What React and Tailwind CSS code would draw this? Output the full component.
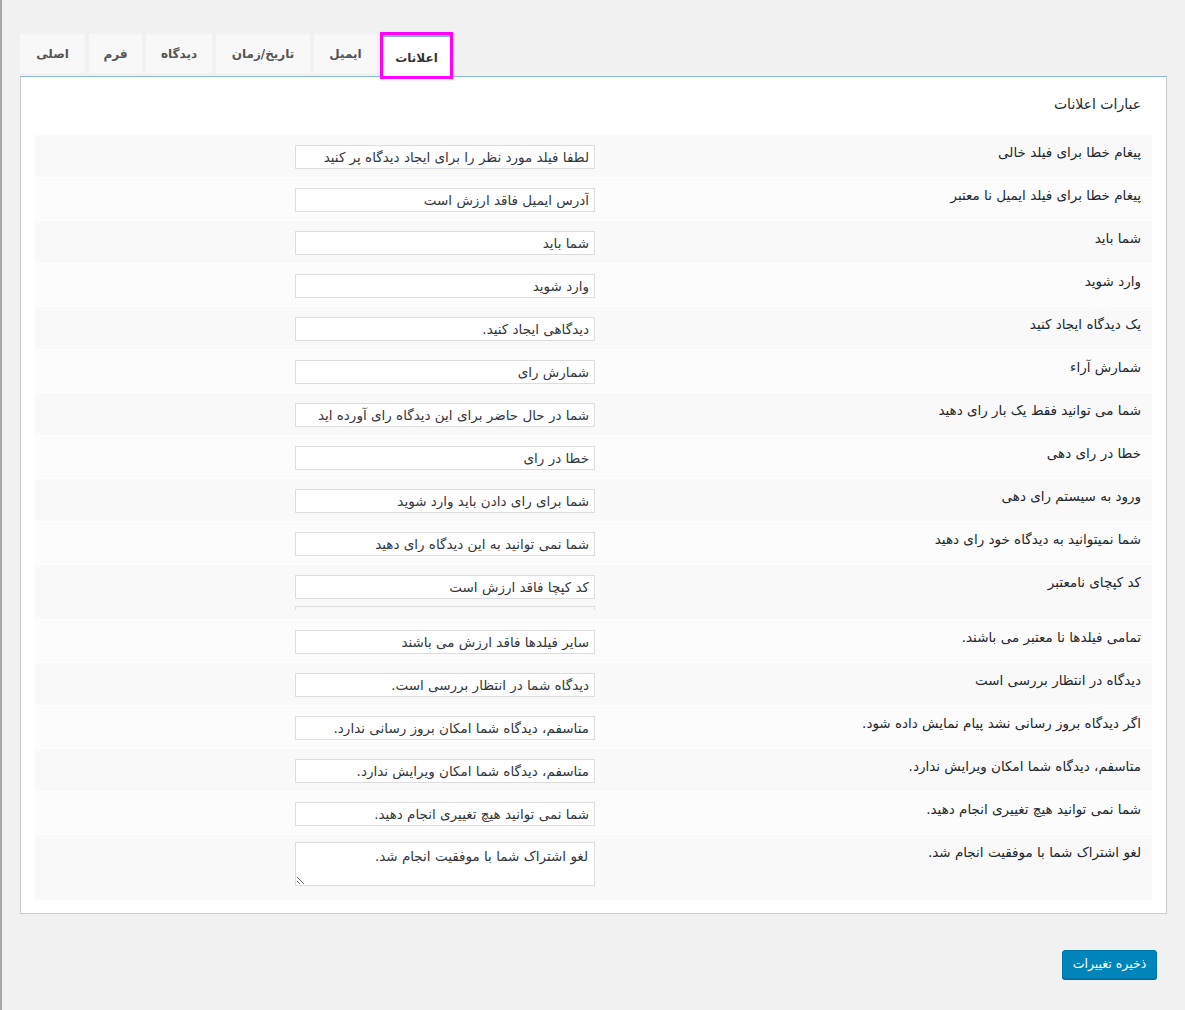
import React from "react";

const rows = [
  ["پیغام خطا برای فیلد خالی", "لطفا فیلد مورد نظر را برای ایجاد دیدگاه پر کنید"],
  ["پیغام خطا برای فیلد ایمیل نا معتبر", "آدرس ایمیل فاقد ارزش است"],
  ["شما باید", "شما باید"],
  ["وارد شوید", "وارد شوید"],
  ["یک دیدگاه ایجاد کنید", "دیدگاهی ایجاد کنید."],
  ["شمارش آراء", "شمارش رای"],
  ["شما می توانید فقط یک بار رای دهید", "شما در حال حاضر برای این دیدگاه رای آورده اید"],
  ["خطا در رای دهی", "خطا در رای"],
  ["ورود به سیستم رای دهی", "شما برای رای دادن باید وارد شوید"],
  ["شما نمیتوانید به دیدگاه خود رای دهید", "شما نمی توانید به این دیدگاه رای دهید"],
  ["کد کپچای نامعتبر", "کد کپچا فاقد ارزش است", "captcha"],
  ["تمامی فیلدها نا معتبر می باشند.", "سایر فیلدها فاقد ارزش می باشند"],
  ["دیدگاه در انتظار بررسی است", "دیدگاه شما در انتظار بررسی است."],
  ["اگر دیدگاه بروز رسانی نشد پیام نمایش داده شود.", "متاسفم، دیدگاه شما امکان بروز رسانی ندارد."],
  ["متاسفم، دیدگاه شما امکان ویرایش ندارد.", "متاسفم، دیدگاه شما امکان ویرایش ندارد."],
  ["شما نمی توانید هیچ تغییری انجام دهید.", "شما نمی توانید هیچ تغییری انجام دهید."],
  ["لغو اشتراک شما با موفقیت انجام شد.", "لغو اشتراک شما با موفقیت انجام شد.", "textarea"],
];

const tabs = [
  ["اصلی", "w-[65px]"],
  ["فرم", "w-[53px]"],
  ["دیدگاه", "w-[66px]"],
  ["تاریخ/زمان", "w-[94px]"],
  ["ایمیل", "w-[63px]"],
];

const font = { fontFamily: '"DejaVu Sans", sans-serif' };

export default function App() {
  return (
    <div
      className="min-h-[1010px] bg-[#f1f1f1] border-l-2 border-[#a8a8a8] pl-[18px] pr-[18px] pt-[32px] text-[#32373c]"
      style={font}
    >
      {/* Tabs */}
      <div className="flex items-start gap-[4px] h-[44px]">
        {tabs.map(([t, w]) => (
          <div
            key={t}
            className={`${w} mt-[2px] h-[39px] bg-[#f8f8f8] flex items-center justify-center text-[12px] font-bold text-[#555]`}
            dir="rtl"
          >
            {t}
          </div>
        ))}
        <div className="relative z-10 -ml-px w-[73px] h-[47px] border-[3px] border-[#ff00ff]">
          <div
            className="h-full bg-white border-t-2 border-[#7fb3de] flex items-center justify-center pt-[2px] text-[12px] font-bold text-[#333]"
            dir="rtl"
          >
            اعلانات
          </div>
        </div>
      </div>

      {/* Panel */}
      <div className="bg-white border border-[#cccccc] border-t-[#8cb6d8] px-[14px] pt-[17px] pb-[13px]" dir="rtl">
        <h2 className="text-[14px] leading-[20px] font-normal text-[#23282d] pr-[11px] mb-[21px]">
          عبارات اعلانات
        </h2>
        <div className="flex flex-col gap-px">
          {rows.map(([label, value, kind], i) => (
            <div
              key={i}
              className={`flex ${i % 2 === 0 ? "bg-[#f9f9f9]" : "bg-[#fcfcfc]"} ${
                kind === "captcha" ? "h-[54px]" : kind === "textarea" ? "h-[65px]" : "h-[42px]"
              }`}
            >
              <div className="w-[547px] shrink-0 pr-[11px] pt-[8px] text-[13.5px] leading-[18px] text-[#23282d]">
                {label}
              </div>
              <div className={`flex-1 pr-[10px] ${kind === "textarea" ? "pt-[7px]" : "pt-[10px]"} overflow-hidden`}>
                {kind === "textarea" ? (
                  <textarea
                    dir="rtl"
                    readOnly
                    defaultValue={value}
                    className="block w-[300px] h-[44px] border border-[#dddddd] bg-white px-[6px] pt-[4px] text-[13.5px] leading-[18px] text-[#32373c] outline-none resize"
                    style={font}
                  />
                ) : (
                  <input
                    dir="rtl"
                    readOnly
                    defaultValue={value}
                    className="block w-[300px] h-[24px] border border-[#dddddd] bg-white px-[5px] text-[13.5px] text-[#32373c] outline-none"
                    style={font}
                  />
                )}
                {kind === "captcha" && (
                  <div className="w-[300px] h-[4px] mt-[7px] border border-b-0 border-[#dddddd]" />
                )}
              </div>
            </div>
          ))}
        </div>
      </div>

      {/* Save button */}
      <div className="flex justify-end mt-[36px] mr-[10px]">
        <button
          className="w-[95px] h-[29px] rounded-[3px] bg-[#0085ba] border border-[#0073aa] shadow-[0_1px_0_#006799] text-white text-[12.5px]"
          dir="rtl"
          style={font}
        >
          ذخیره تغییرات
        </button>
      </div>
    </div>
  );
}
